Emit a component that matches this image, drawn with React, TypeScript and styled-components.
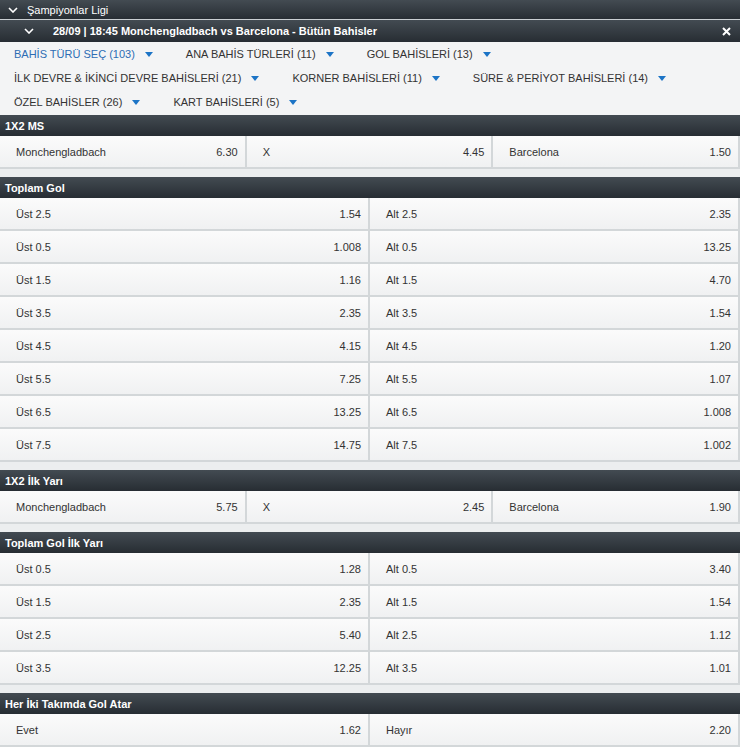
import React from 'react'
import styled, { createGlobalStyle } from 'styled-components'

const Global = createGlobalStyle`
  html, body {
    margin: 0;
    padding: 0;
    background: #eceeef;
    font-family: 'Liberation Sans', Arial, sans-serif;
    font-size: 11px;
    color: #333;
  }
`

const Page = styled.div`
  width: 740px;
  display: flex;
  flex-direction: column;
`

const LeagueBar = styled.div`
  height: 19px;
  display: flex;
  align-items: center;
  padding-left: 8px;
  gap: 9px;
  color: #fff;
  background: linear-gradient(#434b52, #272d33);
  border-bottom: 1px solid #c9ced2;
`

const MatchBar = styled.div`
  height: 22px;
  display: flex;
  align-items: center;
  padding-left: 24px;
  padding-right: 9px;
  color: #fff;
  font-weight: bold;
  background: linear-gradient(#434b52, #272d33);
`

const MatchTitle = styled.span`
  margin-left: 19px;
  flex: 1;
`

const Chevron = ({ size = 10 }: { size?: number }) => (
  <svg width={size} height={size * 0.6} viewBox="0 0 10 6">
    <path d="M1 1 L5 5 L9 1" fill="none" stroke="#fff" strokeWidth="1.6" />
  </svg>
)

const Close = () => (
  <svg width="9" height="9" viewBox="0 0 9 9">
    <path d="M1 1 L8 8 M8 1 L1 8" stroke="#fff" strokeWidth="2" />
  </svg>
)

const Filters = styled.div`
  background: #f3f4f5;
  padding: 0 14px 1px;
  display: flex;
  flex-direction: column;
`

const FilterRow = styled.div`
  height: 24px;
  display: flex;
  align-items: center;
`

const FilterItem = styled.span<{ $active?: boolean }>`
  display: flex;
  align-items: center;
  flex-shrink: 0;
  white-space: nowrap;
  margin-right: 33px;
  color: ${(p) => (p.$active ? '#2d6db4' : '#333')};
`

const Caret = styled.span`
  width: 0;
  height: 0;
  margin-left: 10px;
  border-left: 4px solid transparent;
  border-right: 4px solid transparent;
  border-top: 5px solid #1c74c6;
`

const Section = styled.div`
  margin-bottom: 8px;
  &:last-child {
    margin-bottom: 0;
  }
`

const SectionHeader = styled.div`
  height: 21px;
  display: flex;
  align-items: center;
  padding-left: 5px;
  color: #fff;
  font-weight: bold;
  background: linear-gradient(#434b52, #272d33);
`

const Grid = styled.div<{ $cols: number }>`
  display: grid;
  grid-template-columns: repeat(${(p) => p.$cols}, 1fr);
`

const Cell = styled.div`
  height: 31px;
  display: flex;
  align-items: center;
  justify-content: space-between;
  padding: 0 7px 0 16px;
  background: linear-gradient(#fbfbfb, #f0f1f2);
  border-right: 2px solid #d3d7d9;
  border-bottom: 2px solid #d3d7d9;
  color: #333;
`

const Odd = styled.span`
  color: #333;
`

type Pick = [string, string]

const sections: { title: string; cols: number; picks: Pick[] }[] = [
  {
    title: '1X2 MS',
    cols: 3,
    picks: [['Monchengladbach', '6.30'], ['X', '4.45'], ['Barcelona', '1.50']],
  },
  {
    title: 'Toplam Gol',
    cols: 2,
    picks: [
      ['Üst 2.5', '1.54'], ['Alt 2.5', '2.35'],
      ['Üst 0.5', '1.008'], ['Alt 0.5', '13.25'],
      ['Üst 1.5', '1.16'], ['Alt 1.5', '4.70'],
      ['Üst 3.5', '2.35'], ['Alt 3.5', '1.54'],
      ['Üst 4.5', '4.15'], ['Alt 4.5', '1.20'],
      ['Üst 5.5', '7.25'], ['Alt 5.5', '1.07'],
      ['Üst 6.5', '13.25'], ['Alt 6.5', '1.008'],
      ['Üst 7.5', '14.75'], ['Alt 7.5', '1.002'],
    ],
  },
  {
    title: '1X2 İlk Yarı',
    cols: 3,
    picks: [['Monchengladbach', '5.75'], ['X', '2.45'], ['Barcelona', '1.90']],
  },
  {
    title: 'Toplam Gol İlk Yarı',
    cols: 2,
    picks: [
      ['Üst 0.5', '1.28'], ['Alt 0.5', '3.40'],
      ['Üst 1.5', '2.35'], ['Alt 1.5', '1.54'],
      ['Üst 2.5', '5.40'], ['Alt 2.5', '1.12'],
      ['Üst 3.5', '12.25'], ['Alt 3.5', '1.01'],
    ],
  },
  {
    title: 'Her İki Takımda Gol Atar',
    cols: 2,
    picks: [['Evet', '1.62'], ['Hayır', '2.20']],
  },
]

const filterRows: { label: string; active?: boolean }[][] = [
  [{ label: 'BAHİS TÜRÜ SEÇ (103)', active: true }, { label: 'ANA BAHİS TÜRLERİ (11)' }, { label: 'GOL BAHİSLERİ (13)' }],
  [{ label: 'İLK DEVRE & İKİNCİ DEVRE BAHİSLERİ (21)' }, { label: 'KORNER BAHİSLERİ (11)' }, { label: 'SÜRE & PERİYOT BAHİSLERİ (14)' }],
  [{ label: 'ÖZEL BAHİSLER (26)' }, { label: 'KART BAHİSLERİ (5)' }],
]

export default function App() {
  return (
    <Page>
      <Global />
      <LeagueBar>
        <Chevron />
        <span>Şampiyonlar Ligi</span>
      </LeagueBar>
      <MatchBar>
        <Chevron />
        <MatchTitle>28/09 | 18:45 Monchengladbach vs Barcelona - Bütün Bahisler</MatchTitle>
        <Close />
      </MatchBar>
      <Filters>
        {filterRows.map((row, i) => (
          <FilterRow key={i}>
            {row.map((f) => (
              <FilterItem key={f.label} $active={f.active}>
                {f.label}
                <Caret />
              </FilterItem>
            ))}
          </FilterRow>
        ))}
      </Filters>
      {sections.map((s) => (
        <Section key={s.title}>
          <SectionHeader>{s.title}</SectionHeader>
          <Grid $cols={s.cols}>
            {s.picks.map(([label, odd], i) => (
              <Cell key={i}>
                <span>{label}</span>
                <Odd>{odd}</Odd>
              </Cell>
            ))}
          </Grid>
        </Section>
      ))}
    </Page>
  )
}
